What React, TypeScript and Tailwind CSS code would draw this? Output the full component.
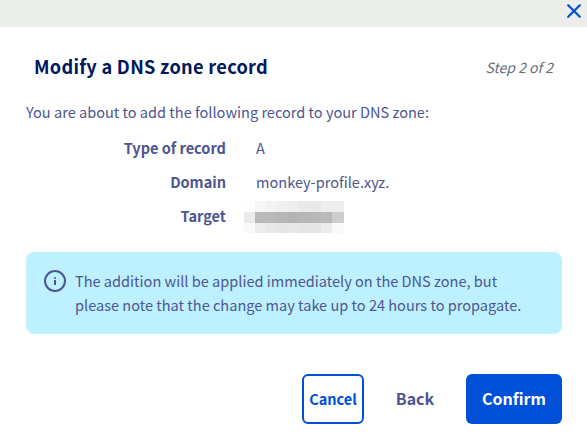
const redacted: string[][] = [
  ["bg-[#fefefe]", "bg-[#f6f6f6]", "bg-[#f3f3f3]", "bg-[#f0f0f0]", "bg-[#eeeeee]", "bg-[#e9e9e8]", "bg-[#e9e9e8]", "bg-[#eeeeed]", "bg-[#eeeeee]"],
  ["bg-[#ebebeb]", "bg-[#b9b9b9]", "bg-[#b9b9b9]", "bg-[#b7b7b7]", "bg-[#b4b4b4]", "bg-[#b6b6b6]", "bg-[#b8b8b8]", "bg-[#bababa]", "bg-[#cecece]"],
  ["bg-[#fafafa]", "bg-[#ececec]", "bg-[#e8e8e8]", "bg-[#e5e6e5]", "bg-[#e7e7e7]", "bg-[#e4e5e4]", "bg-[#e5e5e5]", "bg-[#ececeb]", "bg-[#f8fafc]"],
];

function RedactedValue() {
  return (
    <div className="mt-0.5 ml-[-12px] grid w-[100px] grid-cols-[11px_11px_11px_11px_11px_11px_11px_11px_12px] grid-rows-[11px_11px_10px]">
      {redacted.flat().map((cell, i) => (
        <span key={i} className={cell} />
      ))}
    </div>
  );
}

function Row({ label, children }: { label: string; children: React.ReactNode }) {
  return (
    <div className="flex h-[34px] items-center">
      <dt className="w-[200px] text-right font-bold">{label}</dt>
      <dd className="ml-[30px]">{children}</dd>
    </div>
  );
}

export default function App() {
  return (
    <div className="h-[436px] w-[587px] overflow-hidden bg-white font-['Noto_Sans_CJK_SC','Noto_Sans',sans-serif] text-[14.56px] leading-6 text-[#4d5592]">
      <div className="flex h-[27px] justify-end bg-[#eceeeb] pt-1 pr-[6px]">
        <button aria-label="Close" className="h-[14px] w-[14px]">
          <svg width="14" height="14" viewBox="0 0 14 14" fill="none" stroke="#0050d7" strokeWidth="2.2" strokeLinecap="round">
            <path d="M1.2 1.2 12.8 12.8M12.8 1.2 1.2 12.8" />
          </svg>
        </button>
      </div>
      <div className="flex h-[73px] items-center justify-between pt-[7px] pr-[34px] pl-[34px]">
        <h1 className="-mt-[3px] text-[18.2px] font-bold tracking-[0.28px] text-[#00185e]">Modify a DNS zone record</h1>
        <span className="text-[14px] text-[#666e78] italic">Step 2 of 2</span>
      </div>
      <main className="pr-[25px] pl-[26px]">
        <p className="whitespace-nowrap">You are about to add the following record to your DNS zone:</p>
        <dl className="mt-[7px]">
          <Row label="Type of record">A</Row>
          <Row label="Domain">monkey-profile.xyz.</Row>
          <Row label="Target"><RedactedValue /></Row>
        </dl>
        <div className="mt-[19px] flex h-[82px] gap-[9px] rounded-lg bg-[#bef1ff] pt-[17px] pl-[18px]">
          <svg className="mt-px" width="22" height="22" viewBox="0 0 22 22" fill="none">
            <circle cx="11" cy="11" r="10" stroke="#4d5592" strokeWidth="2" />
            <path d="M11 7.3v1.5M11 10v5" stroke="#4d5592" strokeWidth="2" />
          </svg>
          <p className="whitespace-nowrap">
            The addition will be applied immediately on the DNS zone, but
            <br />
            please note that the change may take up to 24 hours to propagate.
          </p>
        </div>
        <div className="mt-10 flex h-[50px] justify-end font-bold">
          <button className="w-[62px] rounded-md border-2 border-[#0050d7] text-[14.56px] text-[#0050d7]">Cancel</button>
          <button className="w-[102px] pb-0.5 text-base">Back</button>
          <button className="w-24 rounded-md bg-[#0050d7] pb-0.5 text-base text-white">Confirm</button>
        </div>
      </main>
    </div>
  );
}
